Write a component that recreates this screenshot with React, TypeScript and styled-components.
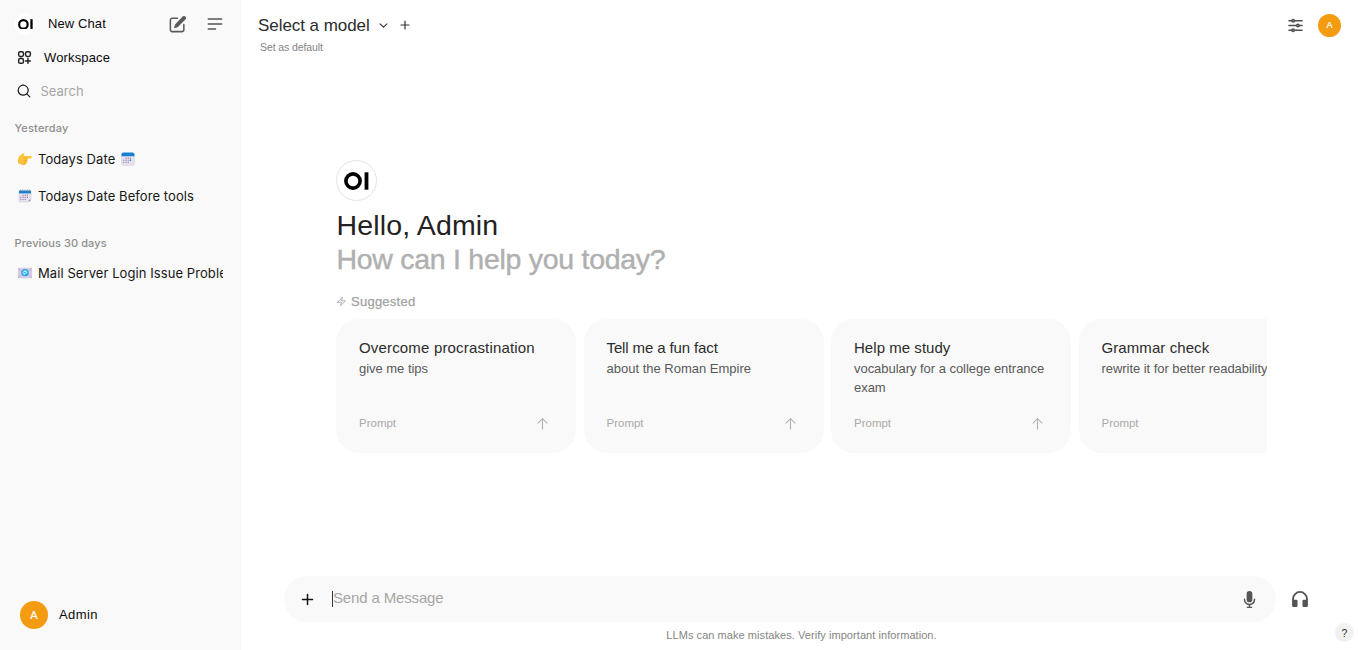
import React from "react";
import styled, { createGlobalStyle } from "styled-components";

const GlobalStyle = createGlobalStyle`
  * { box-sizing: border-box; }
  html, body { margin: 0; padding: 0; }
  body {
    background: #fff;
    font-family: "Liberation Sans", Arial, sans-serif;
    color: #171717;
    overflow: hidden;
  }
`;

const Page = styled.div`
  display: flex;
  width: 100%;
  height: 650px;
  overflow: hidden;
`;

/* ---------- sidebar ---------- */

const Sidebar = styled.aside`
  display: flex;
  flex-direction: column;
  flex: none;
  width: 241px;
  height: 100%;
  padding: 7px 18px 14px 14px;
  background: #f9f9f9;
`;

const NavRow = styled.div<{ $gap: number; $height?: number; $indent?: number }>`
  display: flex;
  align-items: center;
  flex: none;
  height: ${(p) => p.$height ?? 34}px;
  gap: ${(p) => p.$gap}px;
  padding-left: ${(p) => p.$indent ?? 0}px;
`;

const NavLabel = styled.span<{ $track?: number; $left?: number }>`
  flex: 1;
  margin-left: ${(p) => p.$left ?? 0}px;
  font-size: 13px;
  line-height: 18px;
  color: #0a0a0a;
  letter-spacing: ${(p) => p.$track ?? 0}px;
`;

const SidebarActions = styled.div`
  display: flex;
  align-items: center;
  gap: 18px;
  margin-right: -2px;
`;

const RoundLogo = styled.span<{ $size: number; $bordered?: boolean }>`
  display: flex;
  align-items: center;
  justify-content: center;
  flex: none;
  width: ${(p) => p.$size}px;
  height: ${(p) => p.$size}px;
  border-radius: 50%;
  background: #fff;
  border: ${(p) => (p.$bordered ? "1px solid #e3e3e3" : "0")};
`;

const SearchLabel = styled.span`
  font-family: Inter, sans-serif;
  font-size: 13px;
  line-height: 18px;
  color: #a6a6a6;
`;

const SectionLabel = styled.div<{ $top: number; $track: number }>`
  flex: none;
  margin-top: ${(p) => p.$top}px;
  height: 16px;
  padding-left: 0.5px;
  font: 500 11px/16px Inter, sans-serif;
  letter-spacing: ${(p) => p.$track}px;
  color: #8e8e8e;
`;

const ChatRow = styled.div<{ $top: number }>`
  display: flex;
  align-items: center;
  flex: none;
  height: 20px;
  margin-top: ${(p) => p.$top}px;
  padding-left: 4px;
  gap: 6px;
  overflow: hidden;
`;

const ChatTitle = styled.span<{ $track?: number }>`
  flex: none;
  font: 400 13px/20px Inter, sans-serif;
  letter-spacing: ${(p) => p.$track ?? 0.08}px;
  color: #161616;
  white-space: nowrap;
`;

const UserRow = styled.div`
  display: flex;
  align-items: center;
  gap: 11px;
  margin-top: auto;
  padding: 0 0 7px 6px;
`;

const Avatar = styled.span<{ $size: number; $font: number }>`
  display: flex;
  align-items: center;
  justify-content: center;
  flex: none;
  width: ${(p) => p.$size}px;
  height: ${(p) => p.$size}px;
  border-radius: 50%;
  background: #f39c12;
  color: #fff;
  font-size: ${(p) => p.$font}px;
  line-height: 1;
  -webkit-text-stroke: 0.2px #fff;
`;

/* ---------- main column ---------- */

const Main = styled.main`
  display: flex;
  flex-direction: column;
  flex: 1;
  min-width: 0;
  height: 100%;
`;

const Header = styled.header`
  display: flex;
  justify-content: space-between;
  flex: none;
  height: 160px;
  padding: 14px 17px 0 17px;
`;

const ModelLine = styled.div`
  display: flex;
  align-items: center;
  height: 22px;
`;

const ModelName = styled.span`
  font-size: 17px;
  line-height: 22px;
  letter-spacing: -0.05px;
  color: #2b2b2b;
  margin: 1px 8px 0 0;
`;

const PlusSlot = styled.span`
  display: flex;
  margin-left: 10px;
`;

const DefaultLink = styled.div`
  margin: 4px 0 0 2px;
  font-size: 10.5px;
  line-height: 14px;
  letter-spacing: -0.1px;
  color: #858585;
`;

const HeaderActions = styled.div`
  display: flex;
  align-items: center;
  height: 23px;
  gap: 13px;
`;

const Hero = styled.section`
  flex: none;
  margin: 0 91px 0 95px;
  height: 416px;
`;

const Greeting = styled.h1`
  margin: 7px 0 0 0.5px;
  font-size: 28.5px;
  font-weight: 400;
  line-height: 34px;
  letter-spacing: 0.15px;
  color: #222;
`;

const SubGreeting = styled.p`
  margin: 0 0 0 0.5px;
  font-size: 28.5px;
  line-height: 34px;
  letter-spacing: -0.28px;
  color: #b0b0b0;
  -webkit-text-stroke: 0.45px currentColor;
`;

const Suggested = styled.div`
  display: flex;
  align-items: center;
  gap: 4px;
  height: 18px;
  margin: 16px 0 9px;
  font-size: 13px;
  letter-spacing: 0.25px;
  color: #a2a2a2;
  -webkit-text-stroke: 0.25px currentColor;
`;

const Cards = styled.div`
  display: flex;
  gap: 7.5px;
  overflow: hidden;
`;

const Card = styled.article`
  display: flex;
  flex-direction: column;
  flex: none;
  width: 240px;
  height: 134px;
  padding: 18px 23px 20px;
  border-radius: 23px;
  background: #f9f9f9;
`;

const CardTitle = styled.div<{ $track: number }>`
  font-size: 15px;
  line-height: 21px;
  letter-spacing: ${(p) => p.$track}px;
  color: #2c2c2c;
  white-space: nowrap;
`;

const CardText = styled.div<{ $track: number }>`
  margin: 1px -10px 0 0;
  font-size: 13px;
  line-height: 19px;
  letter-spacing: ${(p) => p.$track}px;
  color: #595959;
`;

const CardFoot = styled.div`
  display: flex;
  align-items: center;
  justify-content: space-between;
  height: 20px;
  margin-top: auto;
  padding-right: 3px;
  font-size: 11.5px;
  color: #a9a9a9;
`;

const Composer = styled.div`
  display: flex;
  align-items: center;
  flex: none;
  height: 46px;
  margin: 0 48px 0 43px;
`;

const InputPill = styled.div`
  display: flex;
  align-items: center;
  flex: 1;
  height: 46px;
  padding: 0 17px 0 16px;
  border-radius: 23px;
  background: #f9f9f9;
`;

const Caret = styled.span`
  width: 1px;
  height: 16px;
  margin-left: 17px;
  background: #333;
`;

const Placeholder = styled.span`
  flex: 1;
  margin-top: -3px;
  font-size: 15px;
  letter-spacing: -0.15px;
  color: #a6a6a6;
`;

const HeadphoneSlot = styled.span`
  display: flex;
  margin-left: 14px;
`;

const Footer = styled.footer`
  display: flex;
  align-items: flex-start;
  justify-content: flex-end;
  flex: 1;
  padding: 1px 4px 0 0;
`;

const Notice = styled.div`
  flex: 1;
  padding: 5px 0 0 27px;
  text-align: center;
  font-size: 11px;
  line-height: 14px;
  letter-spacing: 0.06px;
  color: #858585;
`;

const Help = styled.span`
  display: flex;
  align-items: center;
  justify-content: center;
  width: 19px;
  height: 19px;
  border-radius: 50%;
  background: #f1f1f1;
  font-size: 10.5px;
  color: #333;
`;

/* ---------- icons ---------- */

type IconProps = { size: number; color?: string; width?: number; d: string; solid?: boolean; box?: number };

const Glyph = styled.svg`
  flex: none;
`;

const Icon = ({ size, color = "#555", width = 2, d, solid, box = 24 }: IconProps) => (
  <Glyph
    width={size}
    height={size}
    viewBox={`0 0 ${box} ${box}`}
    fill={solid ? color : "none"}
    stroke={solid ? "none" : color}
    strokeWidth={width}
    strokeLinecap="round"
    strokeLinejoin="round"
  >
    <path d={d} fillRule="evenodd" />
  </Glyph>
);

const paths = {
  squaresPlus:
    "M13.5 16.875h3.375m0 0h3.375m-3.375 0V13.5m0 3.375v3.375M6 10.5h2.25a2.25 2.25 0 002.25-2.25V6a2.25 2.25 0 00-2.25-2.25H6A2.25 2.25 0 003.75 6v2.25A2.25 2.25 0 006 10.5zm0 9.75h2.25A2.25 2.25 0 0010.5 18v-2.25a2.25 2.25 0 00-2.25-2.25H6a2.25 2.25 0 00-2.25 2.25V18A2.25 2.25 0 006 20.25zm9.75-9.75H18a2.25 2.25 0 002.25-2.25V6A2.25 2.25 0 0018 3.75h-2.25A2.25 2.25 0 0013.5 6v2.25a2.25 2.25 0 002.25 2.25z",
  search:
    "M9 3.5a5.5 5.5 0 100 11 5.5 5.5 0 000-11zM2 9a7 7 0 1112.452 4.391l3.328 3.329a.75.75 0 11-1.06 1.06l-3.329-3.328A7 7 0 012 9z",
  sliders:
    "M10.5 6h9.75M10.5 6a1.5 1.5 0 11-3 0m3 0a1.5 1.5 0 10-3 0M3.75 6H7.5m3 12h9.75m-9.75 0a1.5 1.5 0 01-3 0m3 0a1.5 1.5 0 00-3 0m-3.75 0H7.5m9-6h3.75m-3.75 0a1.5 1.5 0 01-3 0m3 0a1.5 1.5 0 00-3 0m-9.75 0h9.75",
  mic: "M7 4a3 3 0 016 0v6a3 3 0 11-6 0V4zM5.5 9.643a.75.75 0 00-1.5 0V10c0 3.06 2.29 5.585 5.25 5.954V17.5h-1.5a.75.75 0 000 1.5h4.5a.75.75 0 000-1.5h-1.5v-1.546A6.001 6.001 0 0016 10v-.357a.75.75 0 00-1.5 0V10a4.5 4.5 0 01-9 0v-.357z",
  headphones:
    "M12 4.600a7.200 7.200 0 0 0-7.200 7.400v1h3.200a1 1 0 0 1 1 1v6.500a1 1 0 0 1-1 1H4a1.500 1.500 0 0 1-1.500-1.500v-8a9.500 9.500 0 0 1 19 0v8a1.500 1.500 0 0 1-1.500 1.500h-4a1 1 0 0 1-1-1V14a1 1 0 0 1 1-1h3.200v-1A7.200 7.200 0 0 0 12 4.600Z",
  bolt: "m3.75 13.5 10.5-11.25L12 10.5h8.25L9.75 21.75 12 13.5H3.75Z",
  chevron: "m19.5 8.25-7.5 7.5-7.5-7.5",
  plus: "M12 4v16M4 12h16",
  menu: "M4 6h16M4 12h16M4 18h8.5",
  arrowUp: "M8 13.800V3M3.200 7.600L8 2.800l4.800 4.800",
};

const EditIcon = () => (
  <Glyph width="19" height="19" viewBox="0 0 24 24" fill="none" stroke="#5a5a5a" strokeWidth="1.9" strokeLinecap="round" strokeLinejoin="round">
    <path d="M20 12v6.750A2.250 2.250 0 0117.750 21H5.250A2.250 2.250 0 013 18.750V6.250A2.250 2.250 0 015.250 4H12" />
    <path
      fill="#5a5a5a"
      strokeWidth="1.4"
      d="M17.862 3.487l.987-.988a1.875 1.875 0 112.652 2.652L12.582 14.07a4.500 4.500 0 01-1.897 1.130L8.400 15.900l.8-2.585a4.500 4.500 0 011.130-1.897z"
    />
  </Glyph>
);

const Mark = ({ width }: { width: number }) => (
  <Glyph width={width} height={(width * 18) / 25} viewBox="0 0 25 18">
    <circle cx="9" cy="9" r="7.1" fill="none" stroke="#000" strokeWidth="3.6" />
    <rect x="20.6" y="0.3" width="3.8" height="17.4" fill="#000" />
  </Glyph>
);

const PointIcon = () => (
  <Glyph width="14" height="14" viewBox="0 0 14 14">
    <path d="M0.3 5.2Q3.2 2.4 5.2 1.3Q6.6 0.9 6.4 2.2L5.6 4H12.6Q13.8 4.1 13.8 5.2Q13.7 6.3 12.6 6.4H9.4Q10.3 7.4 9.2 8.4Q9.8 9.5 8.7 10.3Q9 11.8 7.5 12.2Q4.6 13.1 2.2 11.6L0.3 10.6Z" fill="#fcc436" />
    <path d="M5.8 6.4H9.4M5.8 8.5H9.1M5.6 10.4H8.6" stroke="#e89a26" strokeWidth=".6" />
    <path d="M0.3 7.5V10.6L2.2 11.6Q4.6 13.1 7.5 12.2" fill="none" stroke="#ee9f2c" strokeWidth=".7" />
  </Glyph>
);

const dots = [
  [5, 6.1], [7.2, 6.1], [9.4, 6.1],
  [2.8, 8.2], [5, 8.2], [7.2, 8.2], [9.4, 8.2],
  [2.8, 10.3], [5, 10.3], [7.2, 10.3],
];

const CalendarIcon = ({ rings }: { rings?: boolean }) => (
  <Glyph width="14" height="14" viewBox="0 0 14 14">
    <path d={rings ? "M1 2h12v8.800L10.800 13H1z" : "M.7 2h12.600v9.500q0 1.800-1.800 1.800h-9q-1.800 0-1.800-1.800z"} fill="#e9e3f0" stroke="#c9bdd6" strokeWidth=".5" />
    {rings && <path d="M10.8 13V10.8H13z" fill="#998aae" />}
    <path d={rings ? "M1 1.600h12v2.800H1z" : "M.6 4.300V2.300Q.6.500 2.400.500h9.200q1.800 0 1.800 1.800v2z"} fill="#1580cf" />
    {rings && <path d="M2.500.600v2M4.750.600v2M7 .600v2M9.250.600v2M11.500.600v2" stroke="#75808f" strokeWidth=".7" />}
    {dots.map(([x, y]) => (
      <rect key={`${x}-${y}`} x={x - 0.5} y={y - 0.5} width="1.1" height="1.1" fill="#8676a0" />
    ))}
    {!rings && <rect x="8.800" y="7.600" width="1.400" height="1.400" fill="#1592e6" />}
  </Glyph>
);

const MailIcon = () => (
  <Glyph width="14" height="14" viewBox="0 0 14 14">
    <rect x="0" y="1.7" width="14" height="10.6" rx="1" fill="#d8cce4" />
    <path d="M0 2.300L7 8.500l7-6.200M0 12l4.800-4.900M14 12L9.200 7.100" fill="none" stroke="#b5a4c8" strokeWidth=".7" />
    <circle cx="7" cy="6.6" r="3.7" fill="#16a4ee" />
    <circle cx="7" cy="6.6" r="1.3" fill="none" stroke="#fff" strokeWidth=".8" />
    <path d="M8.400 5.300v1.600q.8 1 .9-.6Q8.900 4.200 7 4.200 4.700 4.500 4.600 6.600 4.800 8.900 7 9" fill="none" stroke="#d9f2ff" strokeWidth=".5" />
  </Glyph>
);

/* ---------- content ---------- */

const prompts = [
  { title: "Overcome procrastination", text: "give me tips", track: 0.17, textTrack: -0.03 },
  { title: "Tell me a fun fact", text: "about the Roman Empire", track: -0.12, textTrack: 0 },
  { title: "Help me study", text: "vocabulary for a college entrance exam", track: 0.04, textTrack: -0.04 },
  { title: "Grammar check", text: "rewrite it for better readability", track: 0.08, textTrack: -0.05 },
];

export default function App() {
  return (
    <Page>
      <GlobalStyle />
      <Sidebar>
        <NavRow $gap={0}>
          <RoundLogo $size={22}>
            <Mark width={15} />
          </RoundLogo>
          <NavLabel $track={0.1} $left={12}>New Chat</NavLabel>
          <SidebarActions>
            <EditIcon />
            <Icon size={20} width={1.9} d={paths.menu} />
          </SidebarActions>
        </NavRow>
        <NavRow $gap={11} $indent={2} $height={33}>
          <Icon size={17} color="#222" width={2.1} d={paths.squaresPlus} />
          <NavLabel $track={0.15}>Workspace</NavLabel>
        </NavRow>
        <NavRow $gap={9} $indent={1.5}>
          <Icon size={16} box={20} color="#1c1c1c" solid d={paths.search} />
          <SearchLabel>Search</SearchLabel>
        </NavRow>
        <SectionLabel $top={12} $track={0.17}>Yesterday</SectionLabel>
        <ChatRow $top={13}>
          <PointIcon />
          <ChatTitle>Todays Date</ChatTitle>
          <CalendarIcon />
        </ChatRow>
        <ChatRow $top={17}>
          <CalendarIcon rings />
          <ChatTitle>Todays Date Before tools</ChatTitle>
        </ChatRow>
        <SectionLabel $top={29} $track={0.1}>Previous 30 days</SectionLabel>
        <ChatRow $top={12}>
          <MailIcon />
          <ChatTitle>Mail Server Login Issue Problem</ChatTitle>
        </ChatRow>
        <UserRow>
          <Avatar $size={28} $font={11}>A</Avatar>
          <NavLabel $track={0.4}>Admin</NavLabel>
        </UserRow>
      </Sidebar>

      <Main>
        <Header>
          <div>
            <ModelLine>
              <ModelName>Select a model</ModelName>
              <Icon size={11} color="#333" width={2.4} d={paths.chevron} />
              <PlusSlot>
                <Icon size={12} color="#333" width={2.4} d={paths.plus} />
              </PlusSlot>
            </ModelLine>
            <DefaultLink>Set as default</DefaultLink>
          </div>
          <HeaderActions>
            <Icon size={19} color="#505050" d={paths.sliders} />
            <Avatar $size={23} $font={9}>A</Avatar>
          </HeaderActions>
        </Header>

        <Hero>
          <RoundLogo $size={41} $bordered>
            <Mark width={25} />
          </RoundLogo>
          <Greeting>Hello, Admin</Greeting>
          <SubGreeting>How can I help you today?</SubGreeting>
          <Suggested>
            <Icon size={11} color="#a2a2a2" width={1.8} d={paths.bolt} />
            Suggested
          </Suggested>
          <Cards>
            {prompts.map((p) => (
              <Card key={p.title}>
                <CardTitle $track={p.track}>{p.title}</CardTitle>
                <CardText $track={p.textTrack}>{p.text}</CardText>
                <CardFoot>
                  Prompt
                  <Icon size={15} box={16} color="#b4b4b4" width={1.2} d={paths.arrowUp} />
                </CardFoot>
              </Card>
            ))}
          </Cards>
        </Hero>

        <Composer>
          <InputPill>
            <Icon size={15} color="#111" width={2.4} d={paths.plus} />
            <Caret />
            <Placeholder>Send a Message</Placeholder>
            <Icon size={19} box={20} color="#555" solid d={paths.mic} />
          </InputPill>
          <HeadphoneSlot>
            <Icon size={20} color="#555" solid d={paths.headphones} />
          </HeadphoneSlot>
        </Composer>
        <Footer>
          <Notice>LLMs can make mistakes. Verify important information.</Notice>
          <Help>?</Help>
        </Footer>
      </Main>
    </Page>
  );
}
